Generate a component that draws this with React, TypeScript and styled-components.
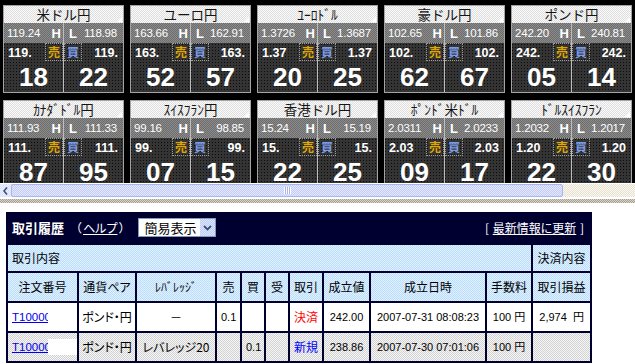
import React from "react";
import styled, { createGlobalStyle, css } from "styled-components";

const GlobalStyle = createGlobalStyle`
  html, body { margin: 0; padding: 0; background: #ffffff; }
  body { font-family: "Liberation Sans", "Noto Sans CJK JP", sans-serif; }
  * { box-sizing: border-box; }
`;

const checker = (base: string, dot: string) => css`
  background-color: ${base};
  background-image: repeating-conic-gradient(${dot} 0 25%, transparent 0 50%);
  background-size: 2px 2px;
`;

const sparseDots = (base: string, dot: string) => css`
  background-color: ${base};
  background-image: conic-gradient(at 1px 1px, transparent 0 75%, ${dot} 0 100%);
  background-size: 3px 3px;
`;

type TileData = {
  name: string;
  high: string;
  low: string;
  bidHead: string;
  askHead: string;
  bid: string;
  ask: string;
};

const tiles: TileData[] = [
  { name: "米ドル円", high: "119.24", low: "118.98", bidHead: "119.", askHead: "119.", bid: "18", ask: "22" },
  { name: "ユーロ円", high: "163.66", low: "162.91", bidHead: "163.", askHead: "163.", bid: "52", ask: "57" },
  { name: "ﾕｰﾛﾄﾞﾙ", high: "1.3726", low: "1.3687", bidHead: "1.37", askHead: "1.37", bid: "20", ask: "25" },
  { name: "豪ドル円", high: "102.65", low: "101.86", bidHead: "102.", askHead: "102.", bid: "62", ask: "67" },
  { name: "ポンド円", high: "242.20", low: "240.81", bidHead: "242.", askHead: "242.", bid: "05", ask: "14" },
  { name: "ｶﾅﾀﾞﾄﾞﾙ円", high: "111.93", low: "111.33", bidHead: "111.", askHead: "111.", bid: "87", ask: "95" },
  { name: "ｽｲｽﾌﾗﾝ円", high: "99.16", low: "98.85", bidHead: "99.", askHead: "99.", bid: "07", ask: "15" },
  { name: "香港ドル円", high: "15.24", low: "15.19", bidHead: "15.", askHead: "15.", bid: "22", ask: "25" },
  { name: "ﾎﾟﾝﾄﾞ米ﾄﾞﾙ", high: "2.0311", low: "2.0233", bidHead: "2.03", askHead: "2.03", bid: "09", ask: "17" },
  { name: "ﾄﾞﾙｽｲｽﾌﾗﾝ", high: "1.2032", low: "1.2017", bidHead: "1.20", askHead: "1.20", bid: "22", ask: "30" },
];

/* ---------- rate board ---------- */

const Board = styled.div`
  background: #000000;
  height: 183px;
  overflow: hidden;
  padding: 5px 3px 0;
`;

const TileGrid = styled.div`
  display: grid;
  grid-template-columns: repeat(5, 121px);
  column-gap: 6px;
  row-gap: 7px;
`;

const Tile = styled.div`
  width: 121px;
  height: 88px;
  border: 1px solid #a4a4a4;
  display: flex;
  flex-direction: column;
`;

const TileHead = styled.div`
  position: relative;
  height: 17px;
  flex: none;
  display: flex;
  align-items: center;
  justify-content: center;
  ${checker("#dedede", "#fafafa")}
  color: #141414;
  font-family: "Noto Sans CJK JP", sans-serif;
  font-size: 13.5px;
  line-height: 1;
  white-space: nowrap;
`;

const Grip = styled.span`
  position: absolute;
  right: 1px;
  bottom: 1px;
  width: 0;
  height: 0;
  border-left: 5px solid transparent;
  border-bottom: 5px solid #ffffff;
`;

const TileBody = styled.div`
  flex: 1;
  display: grid;
  grid-template-columns: 60px 59px;
`;

const Half = styled.div<{ $left?: boolean }>`
  display: flex;
  flex-direction: column;
  ${sparseDots("#343434", "#0c0c0c")}
  border-right: ${(p) => (p.$left ? "1px solid #bcbcbc" : "none")};
`;

const HLCell = styled.div<{ $left?: boolean }>`
  height: 20px;
  display: flex;
  align-items: center;
  justify-content: space-between;
  padding: ${(p) => (p.$left ? "0 2px 0 3px" : "0 6px 0 5px")};
  ${checker("#6c6c6c", "#8c8c8c")}
  color: #ffffff;
`;

const HLNum = styled.span`
  font-size: 11.5px;
  letter-spacing: -0.2px;
`;

const HLMark = styled.span`
  font-size: 13px;
  font-weight: bold;
`;

const PriceCell = styled.div<{ $left?: boolean }>`
  height: 18px;
  display: flex;
  align-items: center;
  justify-content: space-between;
  flex-direction: ${(p) => (p.$left ? "row" : "row-reverse")};
  padding: ${(p) => (p.$left ? "0 0 0 4px" : "0 5px 0 0")};
  color: #ffffff;
`;

const PriceHead = styled.span`
  font-size: 12.5px;
  font-weight: bold;
  padding-top: 1px;
`;

const SideBox = styled.span<{ $sell?: boolean }>`
  width: 18px;
  height: 18px;
  border: 1px dotted #9a9a9a;
  display: flex;
  align-items: center;
  justify-content: center;
  font-family: "Noto Sans CJK JP", sans-serif;
  font-size: 12px;
  line-height: 1;
  font-weight: bold;
  color: ${(p) => (p.$sell ? "#e0a800" : "#7c9ce8")};
`;

const BigCell = styled.div`
  flex: 1;
  display: flex;
  align-items: center;
  justify-content: center;
  color: #ffffff;
  font-size: 26px;
  font-weight: bold;
  line-height: 1;
  padding-top: 1px;
`;

const RateTile: React.FC<{ d: TileData }> = ({ d }) => (
  <Tile>
    <TileHead>
      {d.name}
      <Grip />
    </TileHead>
    <TileBody>
      <Half $left>
        <HLCell $left>
          <HLNum>{d.high}</HLNum>
          <HLMark>H</HLMark>
        </HLCell>
        <PriceCell $left>
          <PriceHead>{d.bidHead}</PriceHead>
          <SideBox $sell>売</SideBox>
        </PriceCell>
        <BigCell>{d.bid}</BigCell>
      </Half>
      <Half>
        <HLCell>
          <HLMark>L</HLMark>
          <HLNum>{d.low}</HLNum>
        </HLCell>
        <PriceCell>
          <PriceHead>{d.askHead}</PriceHead>
          <SideBox>買</SideBox>
        </PriceCell>
        <BigCell>{d.ask}</BigCell>
      </Half>
    </TileBody>
  </Tile>
);

/* ---------- scrollbar ---------- */

const ScrollTrack = styled.div`
  height: 14px;
  display: flex;
  border-top: 1px solid #ffffff;
  ${checker("#fbf8ef", "#e6e1d2")}
`;

const ScrollButton = styled.div`
  width: 11px;
  display: flex;
  align-items: center;
  justify-content: center;
  ${checker("#d6e0fa", "#eef2ff")}
`;

const ScrollThumb = styled.div`
  width: 552px;
  display: flex;
  align-items: center;
  justify-content: center;
  border: 1px solid #a6b6ee;
  border-radius: 2px;
  ${checker("#c3cbf7", "#e4e9ff")}
`;

const GripLines = styled.div`
  width: 7px;
  height: 7px;
  background: repeating-linear-gradient(90deg, #ffffff 0 1px, #aab6ea 1px 2px);
`;

const Divider = styled.div`
  height: 4px;
  margin-top: 2px;
  ${checker("#a8a092", "#d8d2c8")}
`;

/* ---------- history panel ---------- */

const Panel = styled.div`
  margin: 9px 0 0 6px;
  width: 586px;
  background: #000030;
`;

const PanelHeader = styled.div`
  height: 31px;
  display: flex;
  align-items: center;
  padding: 0 8px 0 6px;
  color: #ffffff;
  font-family: "Noto Sans CJK JP", sans-serif;
  font-size: 12px;
  line-height: 1;
`;

const PanelTitle = styled.span`
  font-size: 13px;
  font-weight: bold;
  margin-right: 6px;
`;

const HeadLink = styled.a`
  color: #ffffff;
  text-decoration: underline;
  cursor: pointer;
  font-feature-settings: "palt";
  padding: 0 1px;
`;

const SelectBox = styled.div`
  margin-left: 8px;
  width: 78px;
  height: 19px;
  background: #ffffff;
  border: 1px solid #7f9db9;
  display: flex;
  align-items: center;
  justify-content: space-between;
  padding-left: 5px;
  color: #000000;
  font-size: 13px;
`;

const SelectArrow = styled.span`
  width: 15px;
  height: 17px;
  display: flex;
  align-items: center;
  justify-content: center;
  ${checker("#bcccf4", "#dce6fc")}
`;

const Spacer = styled.span`
  flex: 1;
`;

const Table = styled.table`
  border-collapse: separate;
  border-spacing: 2px;
  width: 586px;
  table-layout: fixed;
`;

type Tone = "head" | "white" | "gray";

const Cell = styled.td<{ $tone: Tone; $align?: "left" | "center" | "right"; $num?: boolean; $h?: number; $color?: string }>`
  height: ${(p) => p.$h ?? 28}px;
  padding: 0;
  padding-left: ${(p) => (p.$align === "left" ? "4px" : "0")};
  text-align: ${(p) => p.$align ?? "center"};
  vertical-align: middle;
  white-space: pre;
  overflow: hidden;
  line-height: 14px;
  font-family: ${(p) => (p.$num ? `"Liberation Sans", "Noto Sans CJK JP", sans-serif` : `"Noto Sans CJK JP", sans-serif`)};
  font-feature-settings: "palt";
  font-size: ${(p) => (p.$num ? "11px" : "12px")};
  color: ${(p) => p.$color ?? "#000000"};
  ${(p) =>
    p.$tone === "head"
      ? checker("#b9ddfb", "#e2f1ff")
      : p.$tone === "gray"
      ? checker("#d2d2d2", "#f6f6f6")
      : css`background: #ffffff;`}
`;

const OrderLink = styled.a`
  color: #0000ee;
  text-decoration: underline;
  font-family: "Liberation Sans", sans-serif;
  font-size: 11.5px;
`;

const Redact = styled.span`
  display: inline-block;
  width: 33px;
  height: 16px;
  margin-left: -3px;
  vertical-align: middle;
  background: #ffffff;
`;

const cols = [69, 56, 78, 23, 22, 22, 32, 45, 114, 44, 57];

type Row = {
  tone: Tone;
  pair: string;
  lev: string;
  sell: string;
  buy: string;
  kind: string;
  kindColor: string;
  price: string;
  date: string;
  fee: string;
  pl: string;
};

const rows: Row[] = [
  { tone: "white", pair: "ポンド・円", lev: "－", sell: "0.1", buy: "", kind: "決済", kindColor: "#ff0000", price: "242.00", date: "2007-07-31 08:08:23", fee: "100 円", pl: "2,974  円" },
  { tone: "gray", pair: "ポンド・円", lev: "レバレッジ20", sell: "", buy: "0.1", kind: "新規", kindColor: "#0000ff", price: "238.86", date: "2007-07-30 07:01:06", fee: "100 円", pl: "" },
];

const heads = ["注文番号", "通貨ペア", "ﾚﾊﾞﾚｯｼﾞ", "売", "買", "受", "取引", "成立値", "成立日時", "手数料", "取引損益"];

export default function App() {
  return (
    <>
      <GlobalStyle />
      <Board>
        <TileGrid>
          {tiles.map((t) => (
            <RateTile key={t.name} d={t} />
          ))}
        </TileGrid>
      </Board>
      <ScrollTrack>
        <ScrollButton>
          <svg width="5" height="8" viewBox="0 0 5 8">
            <path d="M4 0.5 L1 4 L4 7.5" fill="none" stroke="#3b4f7a" strokeWidth="1.6" />
          </svg>
        </ScrollButton>
        <ScrollThumb>
          <GripLines />
        </ScrollThumb>
      </ScrollTrack>
      <Divider />
      <Panel>
        <PanelHeader>
          <PanelTitle>取引履歴</PanelTitle>
          <span>（</span>
          <HeadLink>ヘルプ</HeadLink>
          <span>）</span>
          <SelectBox>
            <span>簡易表示</span>
            <SelectArrow>
              <svg width="9" height="6" viewBox="0 0 9 6">
                <path d="M1 1 L4.5 4.5 L8 1" fill="none" stroke="#3b4f7a" strokeWidth="1.8" />
              </svg>
            </SelectArrow>
          </SelectBox>
          <Spacer />
          <span>[&nbsp;</span>
          <HeadLink>最新情報に更新</HeadLink>
          <span>&nbsp;]</span>
        </PanelHeader>
        <Table>
          <colgroup>
            {cols.map((w, i) => (
              <col key={i} style={{ width: w }} />
            ))}
          </colgroup>
          <tbody>
            <tr>
              <Cell $tone="head" $h={26} colSpan={10} $align="left">
                取引内容
              </Cell>
              <Cell $tone="head" $h={26}>
                決済内容
              </Cell>
            </tr>
            <tr>
              {heads.map((h) => (
                <Cell key={h} $tone="head">
                  {h}
                </Cell>
              ))}
            </tr>
            {rows.map((r, i) => (
              <tr key={i}>
                <Cell $tone={r.tone} $align="left">
                  <OrderLink>T10000</OrderLink>
                  <Redact />
                </Cell>
                <Cell $tone={r.tone}>{r.pair}</Cell>
                <Cell $tone={r.tone}>{r.lev}</Cell>
                <Cell $tone={r.tone} $num $align="left">
                  {r.sell}
                </Cell>
                <Cell $tone={r.tone} $num $align="left">
                  {r.buy}
                </Cell>
                <Cell $tone={r.tone} />
                <Cell $tone={r.tone} $color={r.kindColor}>
                  {r.kind}
                </Cell>
                <Cell $tone={r.tone} $num>
                  {r.price}
                </Cell>
                <Cell $tone={r.tone} $num>
                  {r.date}
                </Cell>
                <Cell $tone={r.tone} $num>
                  {r.fee}
                </Cell>
                <Cell $tone={r.tone} $num>
                  {r.pl}
                </Cell>
              </tr>
            ))}
          </tbody>
        </Table>
      </Panel>
    </>
  );
}
